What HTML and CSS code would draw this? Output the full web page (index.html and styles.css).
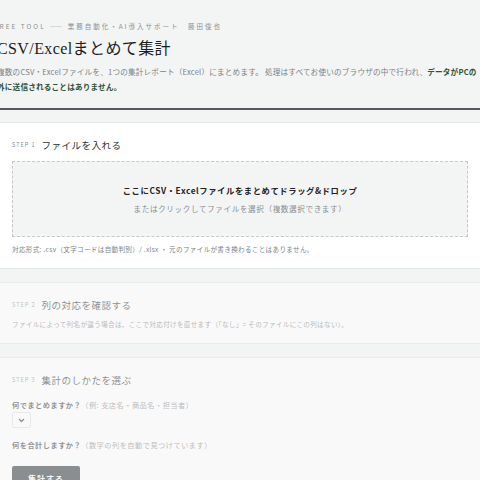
FILE: index.html
```html
<!DOCTYPE html>
<html lang="ja">
<head>
  <meta charset="UTF-8" />
  <meta name="viewport" content="width=device-width, initial-scale=1.0"/>
  <title>CSV/Excelまとめて集計</title>
  <link rel="stylesheet" href="styles.css">
</head>
<body>
  <!-- Page header -->
  <header class="hero">
    <div class="hero-inner">
      <p class="eyebrow">FREE TOOL —— 業務自動化・AI導入サポート　藤田俊也</p>
      <h1 class="title">CSV/Excelまとめて集計</h1>
      <p class="lead">
        複数のCSV・Excelファイルを、1つの集計レポート（Excel）にまとめます。 処理はすべてお使いのブラウザの中で行われ、<strong>データがPCの外に送信されることはありません。</strong>
      </p>
    </div>
  </header>

  <!-- Step 1: file input -->
  <section class="step">
    <div class="step-head"><span class="step-no">STEP 1</span><h2>ファイルを入れる</h2></div>
    <div class="dropzone">
      <p class="drop-main">ここにCSV・Excelファイルをまとめてドラッグ&amp;ドロップ</p>
      <p class="drop-sub">またはクリックしてファイルを選択（複数選択できます）</p>
    </div>
    <p class="note">対応形式: .csv（文字コードは自動判別）/ .xlsx ・ 元のファイルが書き換わることはありません。</p>
  </section>

  <!-- Step 2: column mapping (disabled until files are loaded) -->
  <section class="step is-off">
    <div class="step-head"><span class="step-no">STEP 2</span><h2>列の対応を確認する</h2></div>
    <p class="note">ファイルによって列名が違う場合は、ここで対応付けを直せます（「なし」= そのファイルにこの列はない）。</p>
  </section>

  <!-- Step 3: aggregation settings -->
  <section class="step is-off">
    <div class="step-head"><span class="step-no">STEP 3</span><h2>集計のしかたを選ぶ</h2></div>
    <p class="field-label">何でまとめますか？<span>（例: 支店名・商品名・担当者）</span></p>
    <div class="pick">
      <svg width="7" height="5" viewBox="0 0 7 5"><path d="M1 1l2.5 2.5L6 1" fill="none" stroke="#333" stroke-width="1.3"/></svg>
    </div>
    <p class="field-label second">何を合計しますか？<span>（数字の列を自動で見つけています）</span></p>
    <button class="run">集計する</button>
  </section>
</body>
</html>
```

FILE: styles.css
```css
/* Base */
body {
  margin: 0;
  background: #f3f4f4;
  color: #222;
  font-family: "Noto Sans CJK JP", "Liberation Sans", sans-serif;
  overflow: hidden;
}
p, h1, h2 {
  margin: 0;
}

/* Header */
.hero {
  padding: 21px 0 14px;
  border-bottom: 2px solid #555a5e;
  overflow: hidden;
}
.hero-inner {
  margin-left: -3px;
  width: 481px;
}
.eyebrow {
  margin-left: -3px;
  font-size: 6.5px;
  line-height: 10px;
  letter-spacing: 2px;
  color: #8c9093;
}
.title {
  margin-top: 7px;
  font-family: "Liberation Serif", "Noto Sans CJK JP", serif;
  font-weight: normal;
  font-size: 16px;
  line-height: 22px;
  letter-spacing: 0.4px;
  color: #1b1d1f;
}
.lead {
  margin-top: 4px;
  font-size: 7.6px;
  line-height: 15px;
  letter-spacing: 0.2px;
  color: #7d8286;
}
.lead strong {
  color: #2f5238;
  font-weight: bold;
}

/* Step cards */
.step {
  margin-top: 12px;
  background: #fff;
  border-top: 1px solid #e3e6e6;
  border-bottom: 1px solid #e3e6e6;
  padding: 15px 12px 13px;
}
.step + .step {
  margin-top: 13px;
}
.step.is-off {
  opacity: 0.5;
}
.step-head {
  display: flex;
  align-items: center;
  gap: 6px;
  height: 14px;
}
.step-no {
  font-size: 5.5px;
  letter-spacing: 1px;
  color: #7d8c99;
}
.step-head h2 {
  font-family: "Liberation Serif", "Noto Sans CJK JP", serif;
  font-weight: normal;
  font-size: 9.5px;
  letter-spacing: 0.5px;
  color: #2a2d30;
}

/* Drop area */
.dropzone {
  margin-top: 9px;
  height: 76px;
  box-sizing: border-box;
  padding-top: 22px;
  background: #f3f4f4;
  border: 1px dashed #c6c9cb;
  text-align: center;
}
.drop-main {
  font-size: 8.3px;
  line-height: 12px;
  letter-spacing: 0.6px;
  font-weight: bold;
  color: #222;
}
.drop-sub {
  margin-top: 7px;
  font-size: 7.6px;
  line-height: 12px;
  letter-spacing: 0.6px;
  color: #8a8f93;
}
.note {
  margin-top: 6px;
  font-size: 6.6px;
  line-height: 12px;
  letter-spacing: 0.3px;
  color: #7d8286;
}

/* Step 3 form */
.field-label {
  margin-top: 12px;
  font-size: 7.2px;
  line-height: 12px;
  letter-spacing: 0.5px;
  font-weight: bold;
  color: #333;
}
.field-label span {
  font-weight: normal;
  color: #888;
}
.field-label.second {
  margin-top: 11px;
}
.pick {
  margin-top: 1px;
  width: 19px;
  height: 16px;
  box-sizing: border-box;
  border: 1px solid #ddd;
  border-radius: 2px;
  background: #fff;
  display: flex;
  align-items: center;
  justify-content: center;
}
.run {
  margin-top: 15px;
  width: 68px;
  height: 24px;
  border: none;
  border-radius: 2px;
  background: #252a2e;
  color: #fff;
  font-family: inherit;
  font-size: 8px;
  font-weight: bold;
  letter-spacing: 1px;
}
```
